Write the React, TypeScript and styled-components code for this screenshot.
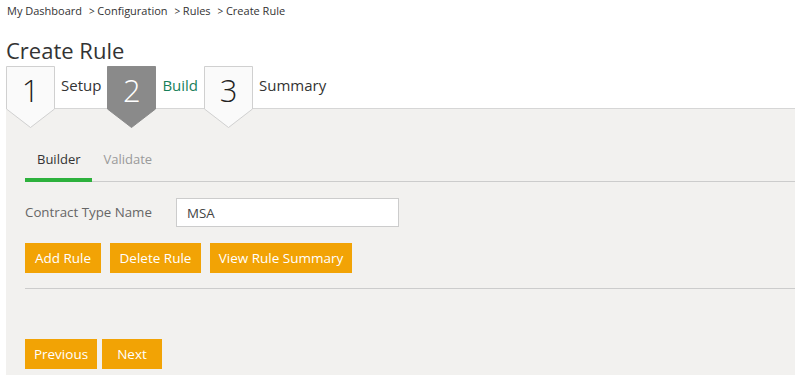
import React from "react";
import styled, { createGlobalStyle } from "styled-components";

const GlobalStyle = createGlobalStyle`
  html, body {
    margin: 0;
    padding: 0;
    background: #fff;
    font-family: "Open Sans", "Noto Sans", Arial, sans-serif;
    color: #333;
  }
`;

const steps = [
  { num: 1, label: "Setup", active: false },
  { num: 2, label: "Build", active: true },
  { num: 3, label: "Summary", active: false },
];

const App = () => {
  return (
    <Page>
      <GlobalStyle />
      <Breadcrumb>
        <Crumb>My Dashboard</Crumb>
        <Crumb $sep>Configuration</Crumb>
        <Crumb $sep>Rules</Crumb>
        <Crumb $sep>Create Rule</Crumb>
      </Breadcrumb>
      <Title>Create Rule</Title>

      <StepBar>
        {steps.map((s) => (
          <Step key={s.num}>
            <Badge>
              <BadgeShape viewBox="0 0 50 62" preserveAspectRatio="none">
                <polygon
                  points="0.5,0.5 49.5,0.5 49.5,43 25,61.5 0.5,43"
                  fill={s.active ? "#8a8a8a" : "#fafafa"}
                  stroke={s.active ? "#8a8a8a" : "#cfcfcf"}
                  strokeWidth="1"
                />
              </BadgeShape>
              <BadgeNum $active={s.active}>{s.num}</BadgeNum>
            </Badge>
            <StepLabel $active={s.active}>{s.label}</StepLabel>
          </Step>
        ))}
      </StepBar>

      <Panel>
        <Tabs>
          <Tab $active>Builder</Tab>
          <Tab>Validate</Tab>
        </Tabs>

        <FieldRow>
          <FieldLabel>Contract Type Name</FieldLabel>
          <TextInput defaultValue="MSA" />
        </FieldRow>

        <ButtonRow $gap={9} $top={16}>
          <Button $wide={76}>Add Rule</Button>
          <Button $wide={91}>Delete Rule</Button>
          <Button $wide={142}>View Rule Summary</Button>
        </ButtonRow>

        <Divider />

        <ButtonRow $gap={5} $top={50}>
          <Button $wide={72}>Previous</Button>
          <Button $wide={60}>Next</Button>
        </ButtonRow>
      </Panel>
    </Page>
  );
};

export default App;

const Page = styled.div`
  width: 795px;
  height: 375px;
  overflow: hidden;
  padding-left: 6px;
  box-sizing: border-box;
`;

const Breadcrumb = styled.div`
  display: flex;
  padding-top: 3px;
  height: 17px;
  font-size: 11px;
  line-height: 16px;
  color: #333;
`;

const Crumb = styled.span<{ $sep?: boolean }>`
  padding-left: 1px;
  margin-right: 6px;
  &::before {
    content: ${(p) => (p.$sep ? '"> "' : '""')};
    font-size: 10px;
  }
`;

const Title = styled.h1`
  margin: 14px 0 0;
  font-size: 22px;
  font-weight: 400;
  line-height: 32px;
  color: #333;
`;

const StepBar = styled.div`
  position: relative;
  z-index: 2;
  display: flex;
  height: 62px;
`;

const Step = styled.div`
  display: flex;
  align-items: flex-start;
`;

const Badge = styled.div`
  position: relative;
  width: 49px;
  height: 62px;
`;

const BadgeShape = styled.svg`
  position: absolute;
  inset: 0;
  width: 100%;
  height: 100%;
`;

const BadgeNum = styled.div<{ $active: boolean }>`
  position: relative;
  text-align: center;
  font-size: 31px;
  font-weight: 300;
  line-height: 48px;
  color: ${(p) => (p.$active ? "#fff" : "#222")};
`;

const StepLabel = styled.div<{ $active: boolean }>`
  padding: 0 6px;
  font-size: 15px;
  line-height: 39px;
  color: ${(p) => (p.$active ? "#17805a" : "#333")};
`;

const Panel = styled.div`
  margin-top: -20px;
  background: #f2f1ef;
  border-top: 1px solid #d6d6d6;
  padding: 36px 0 40px 19px;
  min-height: 300px;
`;

const Tabs = styled.div`
  display: flex;
  border-bottom: 1px solid #cccccc;
`;

const Tab = styled.div<{ $active?: boolean }>`
  padding: 0 11px 0 12px;
  height: 37px;
  line-height: 28px;
  font-size: 13px;
  color: ${(p) => (p.$active ? "#333" : "#9a9a9a")};
  border-bottom: 4px solid ${(p) => (p.$active ? "#2db13c" : "transparent")};
  box-sizing: border-box;
  margin-bottom: -1px;
`;

const FieldRow = styled.div`
  display: flex;
  align-items: center;
  margin-top: 16px;
`;

const FieldLabel = styled.label`
  width: 151px;
  font-size: 13.3px;
  color: #666;
  padding-bottom: 2px;
`;

const TextInput = styled.input`
  width: 223px;
  height: 29px;
  box-sizing: border-box;
  border: 1px solid #cccccc;
  background: #fff;
  padding: 0 10px;
  font-family: "Open Sans", "Noto Sans", Arial, sans-serif;
  font-size: 13.3px;
  color: #444;
  outline: none;
`;

const ButtonRow = styled.div<{ $gap: number; $top: number }>`
  display: flex;
  gap: ${(p) => p.$gap}px;
  margin-top: ${(p) => p.$top}px;
`;

const Button = styled.button<{ $wide: number }>`
  width: ${(p) => p.$wide}px;
  height: 30px;
  padding: 0;
  border: none;
  background: #f2a305;
  color: #fff;
  font-family: "Open Sans", "Noto Sans", Arial, sans-serif;
  font-size: 13.5px;
  cursor: pointer;
`;

const Divider = styled.div`
  margin-top: 15px;
  border-top: 1px solid #cccccc;
`;
